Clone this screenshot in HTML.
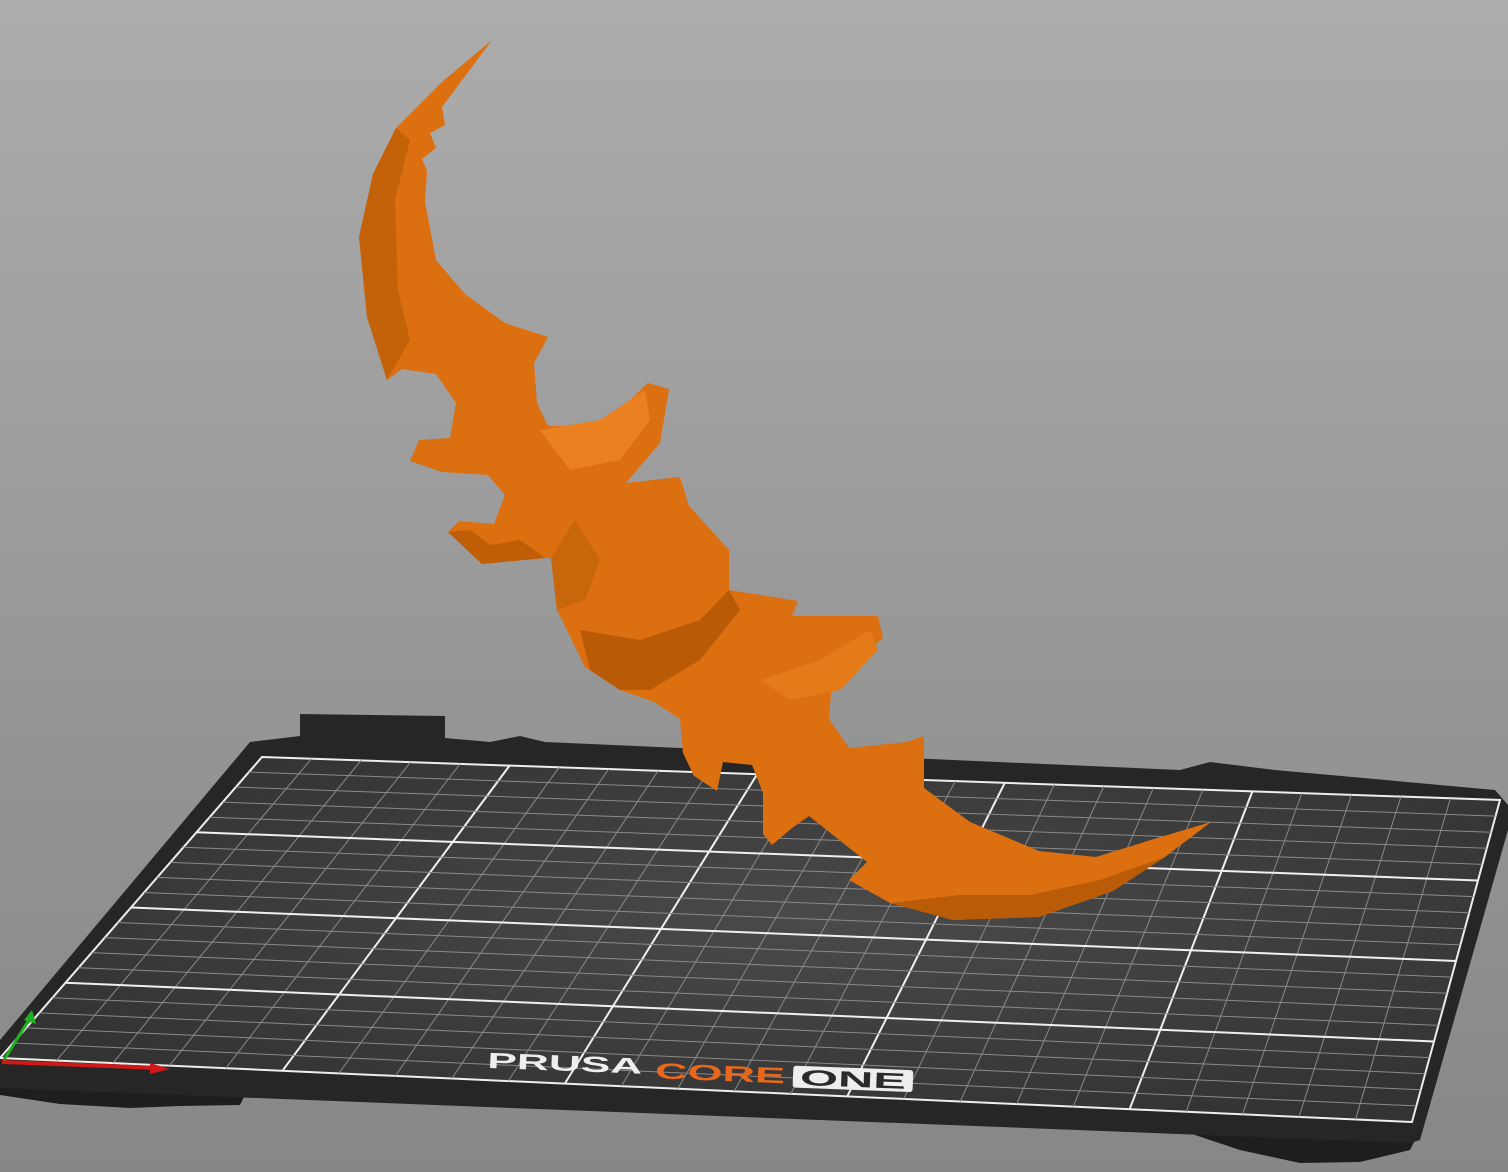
<!DOCTYPE html>
<html><head><meta charset="utf-8"><style>
html,body{margin:0;padding:0;width:1508px;height:1172px;overflow:hidden;background:#9a9a9a}
svg{display:block}
</style></head><body>
<svg id="s" width="1508" height="1172" viewBox="0 0 1508 1172" xmlns="http://www.w3.org/2000/svg">
<defs>
<linearGradient id="bg" x1="0" y1="0" x2="0" y2="1">
<stop offset="0" stop-color="#acacac"/><stop offset="1" stop-color="#878787"/>
</linearGradient>
<radialGradient id="bed" cx="0.55" cy="0.45" r="0.6">
<stop offset="0" stop-color="#4a4a4a"/><stop offset="1" stop-color="#333"/>
</radialGradient>
</defs>
<rect width="1508" height="1172" fill="url(#bg)"/>
<!-- feet -->
<polygon points="0,1070 250,1085 240,1105 180,1106 130,1108 60,1104 0,1095" fill="#1e1e1e"/>
<polygon points="1150,1120 1420,1130 1410,1150 1360,1162 1300,1163 1240,1150" fill="#1e1e1e"/>
<!-- plate -->
<polygon points="0,1040 250,742 300,736 300,714 445,716 445,738 490,742 520,736 545,742 1180,770 1210,762 1275,770 1495,790 1508,805 1508,830 1420,1140 1410,1143 0,1088" fill="#262626"/>
<polygon id="bedin" points="262,757 1500,800 1412,1122 0,1058" fill="url(#bed)" stroke="#eee" stroke-width="2"/>
<g id="grid"></g>
<!-- axes -->
<line x1="2" y1="1062" x2="160" y2="1068" stroke="#d01818" stroke-width="4"/>
<polygon points="150,1063 170,1069 150,1074" fill="#d01818"/>
<line x1="4" y1="1060" x2="30" y2="1018" stroke="#20b020" stroke-width="3"/>
<polygon points="24,1020 32,1010 36,1024" fill="#20b020"/>
<!-- logo -->
<g font-family="Liberation Sans, sans-serif" font-weight="bold" font-size="22" transform="rotate(2.2 700 1075)">
<text x="487" y="1076" fill="#eee" textLength="155" lengthAdjust="spacingAndGlyphs">PRUSA</text>
<text x="655" y="1080" fill="#e8671a" textLength="130" lengthAdjust="spacingAndGlyphs">CORE</text>
<rect x="793" y="1062" width="120" height="22" rx="3" fill="#eee"/>
<text x="800" y="1081" fill="#2a2a2a" textLength="106" lengthAdjust="spacingAndGlyphs">ONE</text>
</g>
<!-- sword -->
<polygon fill="#dc7010" points="492,40 442,107 445,125 430,133 436,148 422,159 427,171 425,202 436,260 465,294 505,323 548,337 534,363 537,403 548,426 603,426 648,383 669,389 660,443 626,483 680,477 689,506 729,550 729,590 798,601 792,616 878,616 883,638 849,667 832,682 829,719 849,748 907,742 924,736 924,788 970,822 1039,851 1096,857 1154,839 1211,822 1165,857 1113,891 1039,917 953,920 890,903 849,880 867,862 809,816 792,828 772,845 763,834 763,793 752,765 723,762 717,791 694,776 683,753 680,719 654,702 620,690 585,667 557,610 551,558 545,558 482,564 448,532 459,521 494,524 505,495 488,475 442,472 410,461 419,440 450,438 456,403 436,374 402,369 387,380 367,317 359,237 373,174 396,128 442,82"/>
<!-- shading -->
<polygon fill="#b85a06" points="580,630 640,640 700,620 729,590 740,610 700,660 650,690 620,690 590,670"/>
<polygon fill="#c4620a" points="373,174 396,128 410,140 395,200 398,290 410,340 387,380 367,317 359,237"/>
<polygon fill="#b95b07" points="890,903 953,920 1039,917 1113,891 1165,857 1100,880 1030,895 960,895"/>
<polygon fill="#c8660b" points="557,610 551,558 575,520 600,560 585,600"/>
<polygon fill="#ea8020" points="540,430 600,420 645,390 650,420 620,460 570,470"/>
<polygon fill="#c05e08" points="448,532 482,564 545,558 520,540 490,545 470,530"/>
<polygon fill="#e57a18" points="760,680 820,660 870,630 878,650 840,690 790,700"/>
</svg>
<script>
(function(){
var TL=[262,757],TR=[1500,800],BR=[1412,1122],BL=[0,1058];
function P(u,v){var tx=TL[0]+(TR[0]-TL[0])*u,ty=TL[1]+(TR[1]-TL[1])*u,bx=BL[0]+(BR[0]-BL[0])*u,by=BL[1]+(BR[1]-BL[1])*u;return [tx+(bx-tx)*v,ty+(by-ty)*v];}
var g=document.getElementById('grid'),h='';
var NX=25,NY=20;
for(var i=1;i<NX;i++){var u=i/NX,a=P(u,0),b=P(u,1),m=i%5==0;h+='<line x1="'+a[0]+'" y1="'+a[1]+'" x2="'+b[0]+'" y2="'+b[1]+'" stroke="'+(m?'#f0f0f0':'#8a8a8a')+'" stroke-width="'+(m?2:1)+'"/>';}
for(var j=1;j<NY;j++){var v=j/NY,a=P(0,v),b=P(1,v),m=j%5==0;h+='<line x1="'+a[0]+'" y1="'+a[1]+'" x2="'+b[0]+'" y2="'+b[1]+'" stroke="'+(m?'#f0f0f0':'#8a8a8a')+'" stroke-width="'+(m?2:1)+'"/>';}
g.innerHTML=h;
})();
</script>
</body></html>
